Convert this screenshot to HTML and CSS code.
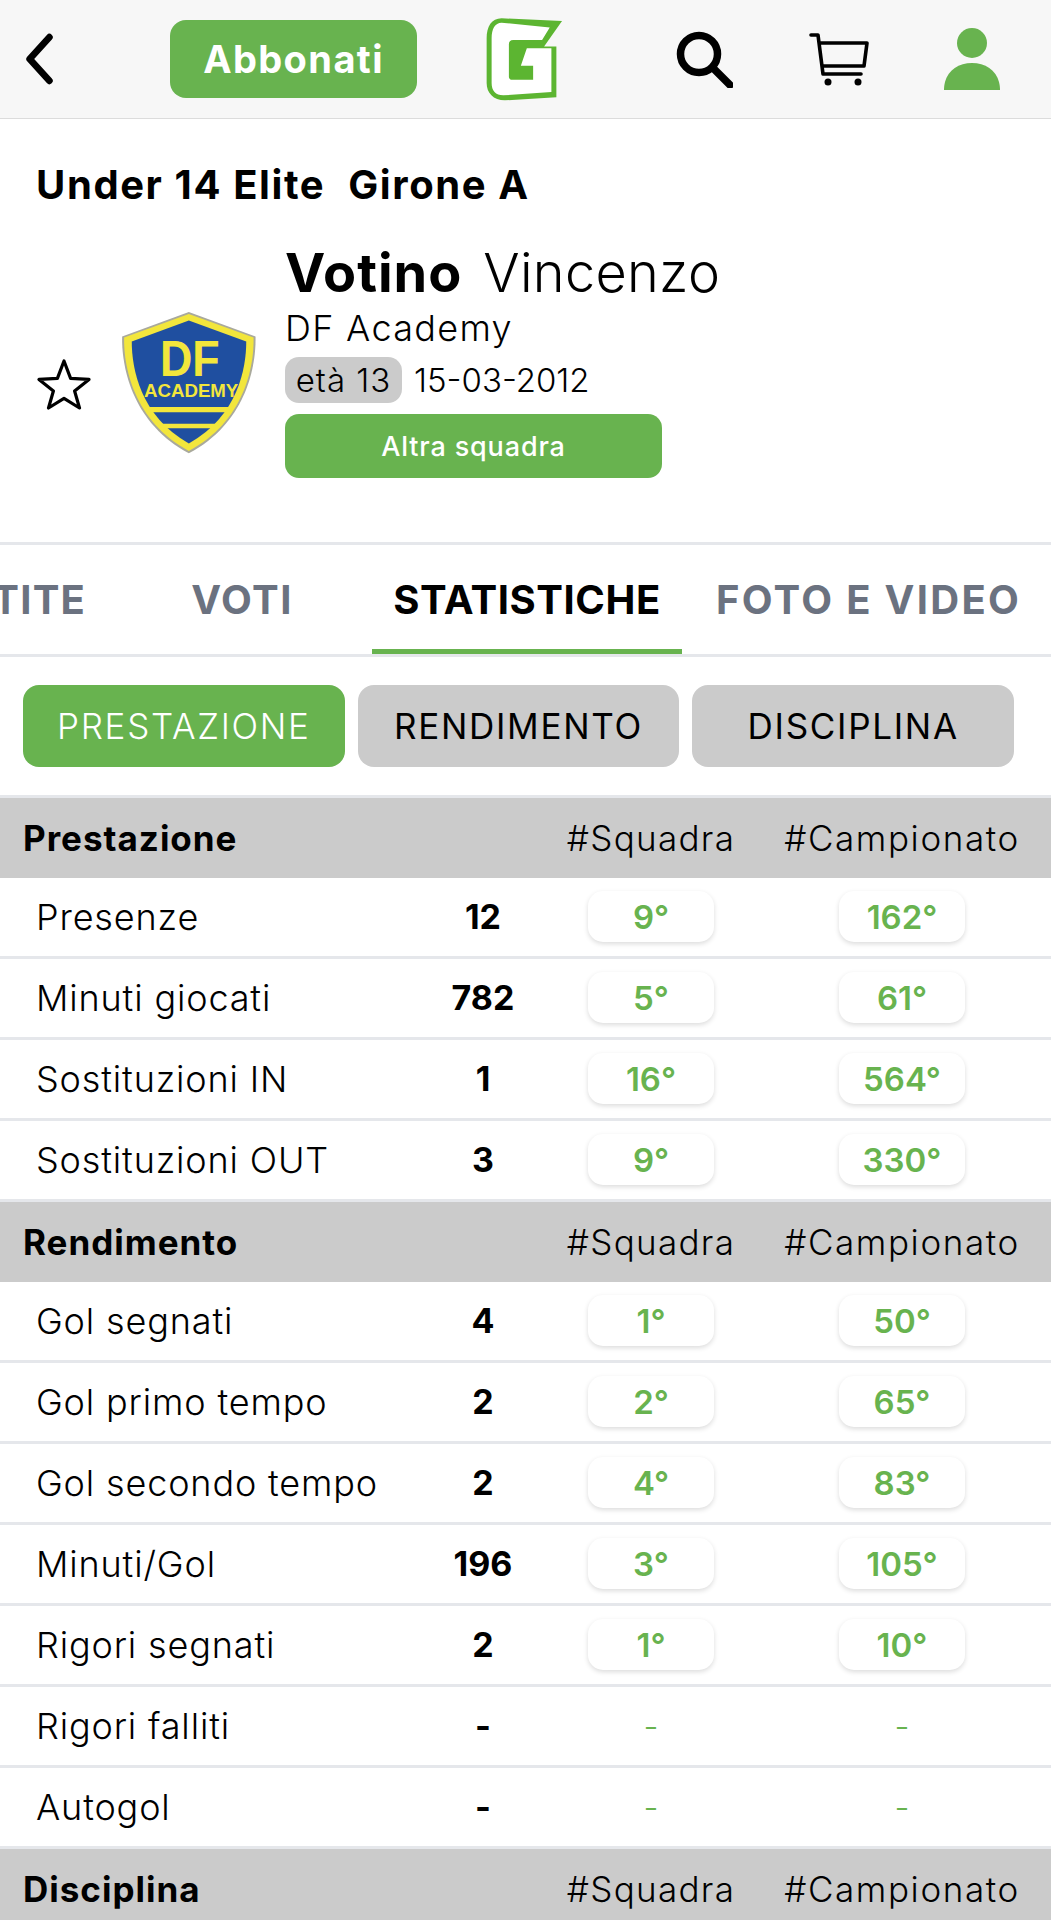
FILE: index.html
```html
<!DOCTYPE html>
<html lang="it">
<head>
<meta charset="utf-8">
<title>Votino Vincenzo</title>
<link rel="stylesheet" href="styles.css">
</head>
<body>
<header class="topbar">
  <svg class="ic-back" viewBox="0 0 30 52"><path d="M25 5 6 26l19 21" /></svg>
  <a class="subscribe">Abbonati</a>
  <svg class="logo" viewBox="45 30 245 265">
    <path d="M100 40 282 48 228 125H265V278L110 287C75 287 55 265 55 235V100C55 65 70 40 100 40Z" fill="#5cb531"/>
    <path d="M100 53 245 68 222 105H135C126 105 122 110 122 118V215C122 222 126 225 132 225H195V183H158L176 130H250V262L105 272C82 272 70 258 70 235V100C70 72 80 53 100 53Z" fill="#fff"/>
  </svg>
  <svg class="ic-search" viewBox="0 0 58 58"><circle cx="24" cy="24" r="18.500"/><path d="m38 38 17 17"/></svg>
  <svg class="ic-cart" viewBox="0 0 60 54"><path d="M2 3h7l5 39h38M11 11h47l-3 23H14" /><circle cx="19" cy="50" r="3.500" class="solid"/><circle cx="49" cy="50" r="3.500" class="solid"/></svg>
  <svg class="ic-user" viewBox="0 0 56 62"><ellipse cx="28" cy="15" rx="15" ry="15"/><path d="M0 62c0-1 0-4 1-8 3-12 14-19 27-19s24 7 27 19c1 4 1 7 1 8Z"/></svg>
</header>

<section class="profile">
  <h1 class="league"><span>Under 14 Elite</span><span>Girone A</span></h1>
  <div class="player">
    <svg class="star" viewBox="0 0 56 52"><path d="m28 3 6.600 17.400L53 21.400 38.600 33l4.900 17L28 40.400 12.500 50l4.900-17L3 21.400l18.400-1Z"/></svg>
    <svg class="crest" viewBox="60 60 415 440">
      <path d="M267 66 468 140C470 230 440 400 267 492 95 400 64 230 66 140Z" fill="#a9a99c"/>
      <path d="M267 72 462 143C464 230 435 395 267 485 100 395 70 230 72 143Z" fill="#f2e63c"/>
      <path d="M267 92 440 155C440 235 415 380 267 462 120 380 95 235 95 155Z" fill="#1f4fa0"/>
      <path d="M135 352H398L390 368H145ZM165 403H370L358 416H178Z" fill="#f2e63c"/>
      <text x="270" y="258" textLength="180" lengthAdjust="spacingAndGlyphs" class="crest-df">DF</text>
      <text x="274" y="322" textLength="284" lengthAdjust="spacingAndGlyphs" class="crest-ac">ACADEMY</text>
    </svg>
    <div class="info">
      <p class="name"><b>Votino</b><span>Vincenzo</span></p>
      <p class="team">DF Academy</p>
      <p class="age"><span class="age-pill">età 13</span><span>15-03-2012</span></p>
      <a class="other">Altra squadra</a>
    </div>
  </div>
</section>

<nav class="tabs">
  <a class="tab t-partite">PARTITE</a>
  <a class="tab t-voti">VOTI</a>
  <a class="tab t-stat active">STATISTICHE</a>
  <a class="tab t-foto">FOTO E VIDEO</a>
</nav>

<div class="filters">
  <a class="filter on">PRESTAZIONE</a>
  <a class="filter">RENDIMENTO</a>
  <a class="filter">DISCIPLINA</a>
</div>

<main class="stats">
  <div class="head"><b>Prestazione</b><i></i><span>#Squadra</span><span>#Campionato</span></div>
  <div class="row"><span>Presenze</span><b>12</b><em>9°</em><em>162°</em></div>
  <div class="row"><span>Minuti giocati</span><b>782</b><em>5°</em><em>61°</em></div>
  <div class="row"><span>Sostituzioni IN</span><b>1</b><em>16°</em><em>564°</em></div>
  <div class="row"><span>Sostituzioni OUT</span><b>3</b><em>9°</em><em>330°</em></div>
  <div class="head"><b>Rendimento</b><i></i><span>#Squadra</span><span>#Campionato</span></div>
  <div class="row"><span>Gol segnati</span><b>4</b><em>1°</em><em>50°</em></div>
  <div class="row"><span>Gol primo tempo</span><b>2</b><em>2°</em><em>65°</em></div>
  <div class="row"><span>Gol secondo tempo</span><b>2</b><em>4°</em><em>83°</em></div>
  <div class="row"><span>Minuti/Gol</span><b>196</b><em>3°</em><em>105°</em></div>
  <div class="row"><span>Rigori segnati</span><b>2</b><em>1°</em><em>10°</em></div>
  <div class="row"><span>Rigori falliti</span><b>-</b><u>-</u><u>-</u></div>
  <div class="row"><span>Autogol</span><b>-</b><u>-</u><u>-</u></div>
  <div class="head"><b>Disciplina</b><i></i><span>#Squadra</span><span>#Campionato</span></div>
</main>
</body>
</html>
```
FILE: styles.css
```css
* { box-sizing: border-box; }
html, body { margin: 0; padding: 0; }
body {
  height: 1920px;
  overflow: hidden;
  background: #fff;
  color: #000;
  font-family: Inter, "Liberation Sans", sans-serif;
}
p, h1 { margin: 0; }

.topbar {
  height: 119px;
  background: #f7f7f7;
  border-bottom: 1px solid #dcdcdc;
  display: flex;
  align-items: center;
  padding-left: 23px;
}
.topbar svg { flex: none; display: block; }
.ic-back { width: 32px; height: 54px; fill: none; stroke: #000; stroke-width: 6.5; stroke-linecap: round; stroke-linejoin: round; }
.subscribe {
  margin-left: 115px;
  width: 247px;
  height: 78px;
  border-radius: 16px;
  background: #68b34f;
  color: #fff;
  font-size: 38px;
  letter-spacing: 1.4px;
  font-weight: 700;
  display: flex;
  align-items: center;
  justify-content: center;
}
.logo { width: 82px; height: 88px; margin-left: 66px; }
.ic-search { width: 58px; height: 58px; margin-left: 110px; fill: none; stroke: #000; stroke-width: 7.5; stroke-linecap: round; }
.ic-cart { width: 60px; height: 54px; margin-left: 76px; fill: none; stroke: #000; stroke-width: 3.6; stroke-linecap: round; stroke-linejoin: round; }
.ic-cart .solid { fill: #000; stroke: none; }
.ic-user { width: 56px; height: 62px; margin-left: 75px; fill: #68b34f; }

.profile {
  height: 426px;
  border-bottom: 3px solid #e5e7eb;
  padding: 40px 36px 0;
}
.league {
  display: flex;
  gap: 23px;
  font-size: 40px;
  letter-spacing: 1.600px;
  font-weight: 700;
  line-height: 52px;
}
.player { display: flex; align-items: center; margin-top: 30px; }
.star { width: 56px; height: 52px; margin-top: 48px; fill: none; stroke: #000; stroke-width: 3.200; stroke-linejoin: round; flex: none; }
.crest { width: 138px; height: 146px; margin-left: 28px; margin-top: 46px; flex: none; }
.crest-df { font-size: 150px; font-weight: 700; fill: #f2e63c; text-anchor: middle; font-family: "Liberation Sans", sans-serif; }
.crest-ac { font-size: 58px; font-weight: 700; fill: #f2e63c; text-anchor: middle; font-family: "Liberation Sans", sans-serif; }
.info { margin-left: 27px; width: 377px; display: flex; flex-direction: column; }
.name { display: flex; gap: 21px; font-size: 54px; letter-spacing: .3px; line-height: 62px; font-weight: 300; white-space: nowrap; padding-top: 1px; }
.name b { font-weight: 700; letter-spacing: 1px; }
.team { font-size: 36px; letter-spacing: 1.300px; line-height: 46px; font-weight: 300; margin-top: 1px; white-space: nowrap; }
.age { display: flex; align-items: center; gap: 12px; font-size: 33px; font-weight: 300; margin-top: 6px; white-space: nowrap; }
.age-pill { background: #cbcbcb; border-radius: 14px; height: 46px; width: 117px; display: flex; align-items: center; justify-content: center; letter-spacing: 1px; }
.other {
  margin-top: 11px;
  height: 64px;
  border-radius: 14px;
  background: #68b34f;
  color: #fff;
  font-size: 27px;
  letter-spacing: .85px;
  font-weight: 500;
  display: flex;
  align-items: center;
  justify-content: center;
}

.tabs {
  height: 112px;
  border-bottom: 3px solid #e5e7eb;
  display: flex;
  justify-content: flex-end;
  overflow: hidden;
}
.tab {
  flex: none;
  display: flex;
  align-items: center;
  justify-content: center;
  height: 109px;
  padding-top: 5px;
  border-bottom: 5px solid transparent;
  font-size: 40px;
  font-weight: 700;
  color: #6b7280;
  white-space: nowrap;
  letter-spacing: .55px;
}
.t-partite { width: 228px; letter-spacing: 1.200px; }
.t-voti { width: 260px; letter-spacing: 1.500px; }
.t-stat { width: 310px; }
.t-foto { width: 369px; padding-left: 4px; letter-spacing: 2.300px; }
.tab.active { color: #000; border-bottom-color: #68b34f; }

.filters {
  display: flex;
  gap: 13px;
  padding: 28px 37px 28px 23px;
}
.filter {
  flex: 1;
  height: 82px;
  border-radius: 16px;
  background: #cbcbcb;
  font-size: 35px;
  letter-spacing: 1.700px;
  font-weight: 400;
  display: flex;
  align-items: center;
  justify-content: center;
}
.filter.on { background: #68b34f; color: #fff; font-weight: 300; }

.stats { border-top: 3px solid #e5e7eb; }
.head, .row {
  display: grid;
  grid-template-columns: 430px 106px 230px 272px;
  align-items: center;
  justify-items: center;
  padding-right: 13px;
}
.head {
  height: 80px;
  background: #cbcbcb;
  font-size: 35px;
  letter-spacing: 1.300px;
  font-weight: 300;
}
.head span:last-child { letter-spacing: 1.600px; }
.head b { justify-self: start; padding-left: 23px; font-size: 35px; letter-spacing: 1px; font-weight: 700; }
.row {
  height: 81px;
  border-bottom: 3px solid #e5e7eb;
  font-size: 36px;
  letter-spacing: .85px;
  font-weight: 300;
  padding-bottom: 1px;
}
.row span { justify-self: start; padding-left: 36px; }
.row b { font-size: 34px; letter-spacing: 0; font-weight: 700; }
.row em {
  font-style: normal;
  font-weight: 600;
  color: #68b34f;
  font-size: 33px;
  letter-spacing: 0;
  width: 126px;
  height: 51px;
  border-radius: 15px;
  background: #fff;
  box-shadow: 0 2px 5px rgba(0,0,0,.14);
  display: flex;
  align-items: center;
  justify-content: center;
}
.row u { text-decoration: none; color: #68b34f; font-size: 33px; letter-spacing: 0; }
```
